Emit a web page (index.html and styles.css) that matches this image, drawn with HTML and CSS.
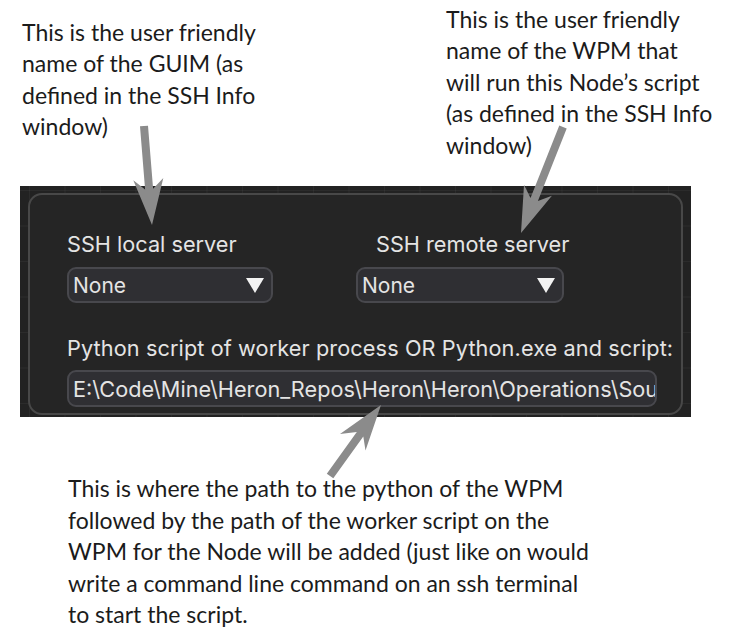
FILE: index.html
```html
<!DOCTYPE html>
<html>
<head>
<meta charset="utf-8">
<link rel="stylesheet" href="styles.css">
</head>
<body>
<div class="page">
  <div class="top-notes">
    <p class="note note-left">This is the user friendly<br>name of the GUIM (as<br>defined in the SSH Info<br>window)</p>
    <p class="note note-right">This is the user friendly<br>name of the WPM that<br>will run this Node’s script<br>(as defined in the SSH Info<br>window)</p>
  </div>
  <section class="panel">
    <div class="node">
      <div class="server-row">
        <div class="field">
          <div class="label">SSH local server</div>
          <div class="combo"><span class="combo-text">None</span><span class="combo-arrow"></span></div>
        </div>
        <div class="field field-remote">
          <div class="label label-remote">SSH remote server</div>
          <div class="combo"><span class="combo-text">None</span><span class="combo-arrow"></span></div>
        </div>
      </div>
      <div class="label label-script">Python script of worker process OR Python.exe and script:</div>
      <div class="text-input"><span class="input-text">E:\Code\Mine\Heron_Repos\Heron\Heron\Operations\Sou</span></div>
    </div>
  </section>
  <p class="note note-bottom">This is where the path to the python of the WPM<br>followed by the path of the worker script on the<br>WPM for the Node will be added (just like on would<br>write a command line command on an ssh terminal<br>to start the script.</p>
  <svg class="arrows" width="734" height="628" viewBox="0 0 734 628">
    <polygon class="arrow" points="140,126.3 148,125.7 153.1,188.8 163.3,177.9 152,225 133.3,180.3 145.1,189.4"/>
    <polygon class="arrow" points="559.3,125.5 566.7,128.5 537.9,201 551.9,195.7 521,233 524,184.7 530.5,198"/>
    <polygon class="arrow" points="326.8,473.7 333.3,478.3 363.3,436.5 365.5,450.5 381,405 340,434 356.8,431.9"/>
  </svg>
</div>
</body>
</html>
```
FILE: styles.css
```css
html, body {
  margin: 0;
  padding: 0;
  background: #ffffff;
}

.page {
  position: relative;
  width: 734px;
  height: 628px;
  overflow: hidden;
}

.note {
  margin: 0;
  font-family: Lato, "Open Sans", sans-serif;
  font-size: 23px;
  line-height: 31.5px;
  color: #1b1b1b;
  white-space: nowrap;
}

.top-notes {
  display: flex;
  height: 186px;
}

.note-left {
  margin-top: 16.8px;
  margin-left: 22px;
}

.note-right {
  margin-top: 3.8px;
  margin-left: auto;
  width: 288px;
}

.note-bottom {
  margin-top: 56px;
  margin-left: 68px;
}

.panel {
  box-sizing: border-box;
  margin-left: 20px;
  width: 671px;
  height: 231px;
  padding: 7px 8px 2px 8px;
  background-color: #222222;
  background-image:
    linear-gradient(to right, rgba(255,255,255,0.045) 1px, transparent 1px),
    linear-gradient(to bottom, rgba(255,255,255,0.045) 1px, transparent 1px);
  background-size: 35.5px 35.5px;
  background-position: 9px 4px;
}

.node {
  box-sizing: border-box;
  height: 100%;
  border: 2px solid #484848;
  border-radius: 14px;
  background: #252525;
  padding: 36px 0 0 37px;
  font-family: Inter, "Noto Sans", sans-serif;
  color: #e4e4e4;
}

.server-row {
  display: flex;
  gap: 83px;
}

.field {
  display: flex;
  flex-direction: column;
}

.field-remote .combo {
  width: 208px;
}

.label {
  font-size: 21.7px;
  line-height: 26px;
  white-space: nowrap;
}

.label-remote {
  margin-left: 20px;
}

.label-script {
  margin-top: 32px;
  letter-spacing: 0.1px;
}

.combo {
  box-sizing: border-box;
  margin-top: 10px;
  width: 206px;
  height: 36px;
  border: 2px solid #48484d;
  border-radius: 9px;
  background: #2f2f33;
  display: flex;
  align-items: center;
  justify-content: space-between;
  padding: 0 7px 0 4px;
}

.combo-text {
  font-size: 21px;
}

.combo-arrow {
  width: 0;
  height: 0;
  border-left: 9.5px solid transparent;
  border-right: 9.5px solid transparent;
  border-top: 15px solid #f2f2f2;
}

.text-input {
  box-sizing: border-box;
  margin-top: 9px;
  width: 590px;
  height: 37px;
  border: 2px solid #48484d;
  border-radius: 9px;
  background: #2f2f33;
  display: flex;
  align-items: center;
  padding: 0 0 0 4px;
  overflow: hidden;
}

.input-text {
  font-size: 21.7px;
  white-space: nowrap;
}

.arrows {
  position: absolute;
  left: 0;
  top: 0;
  pointer-events: none;
}

.arrow {
  fill: #8b8b8b;
}
```
